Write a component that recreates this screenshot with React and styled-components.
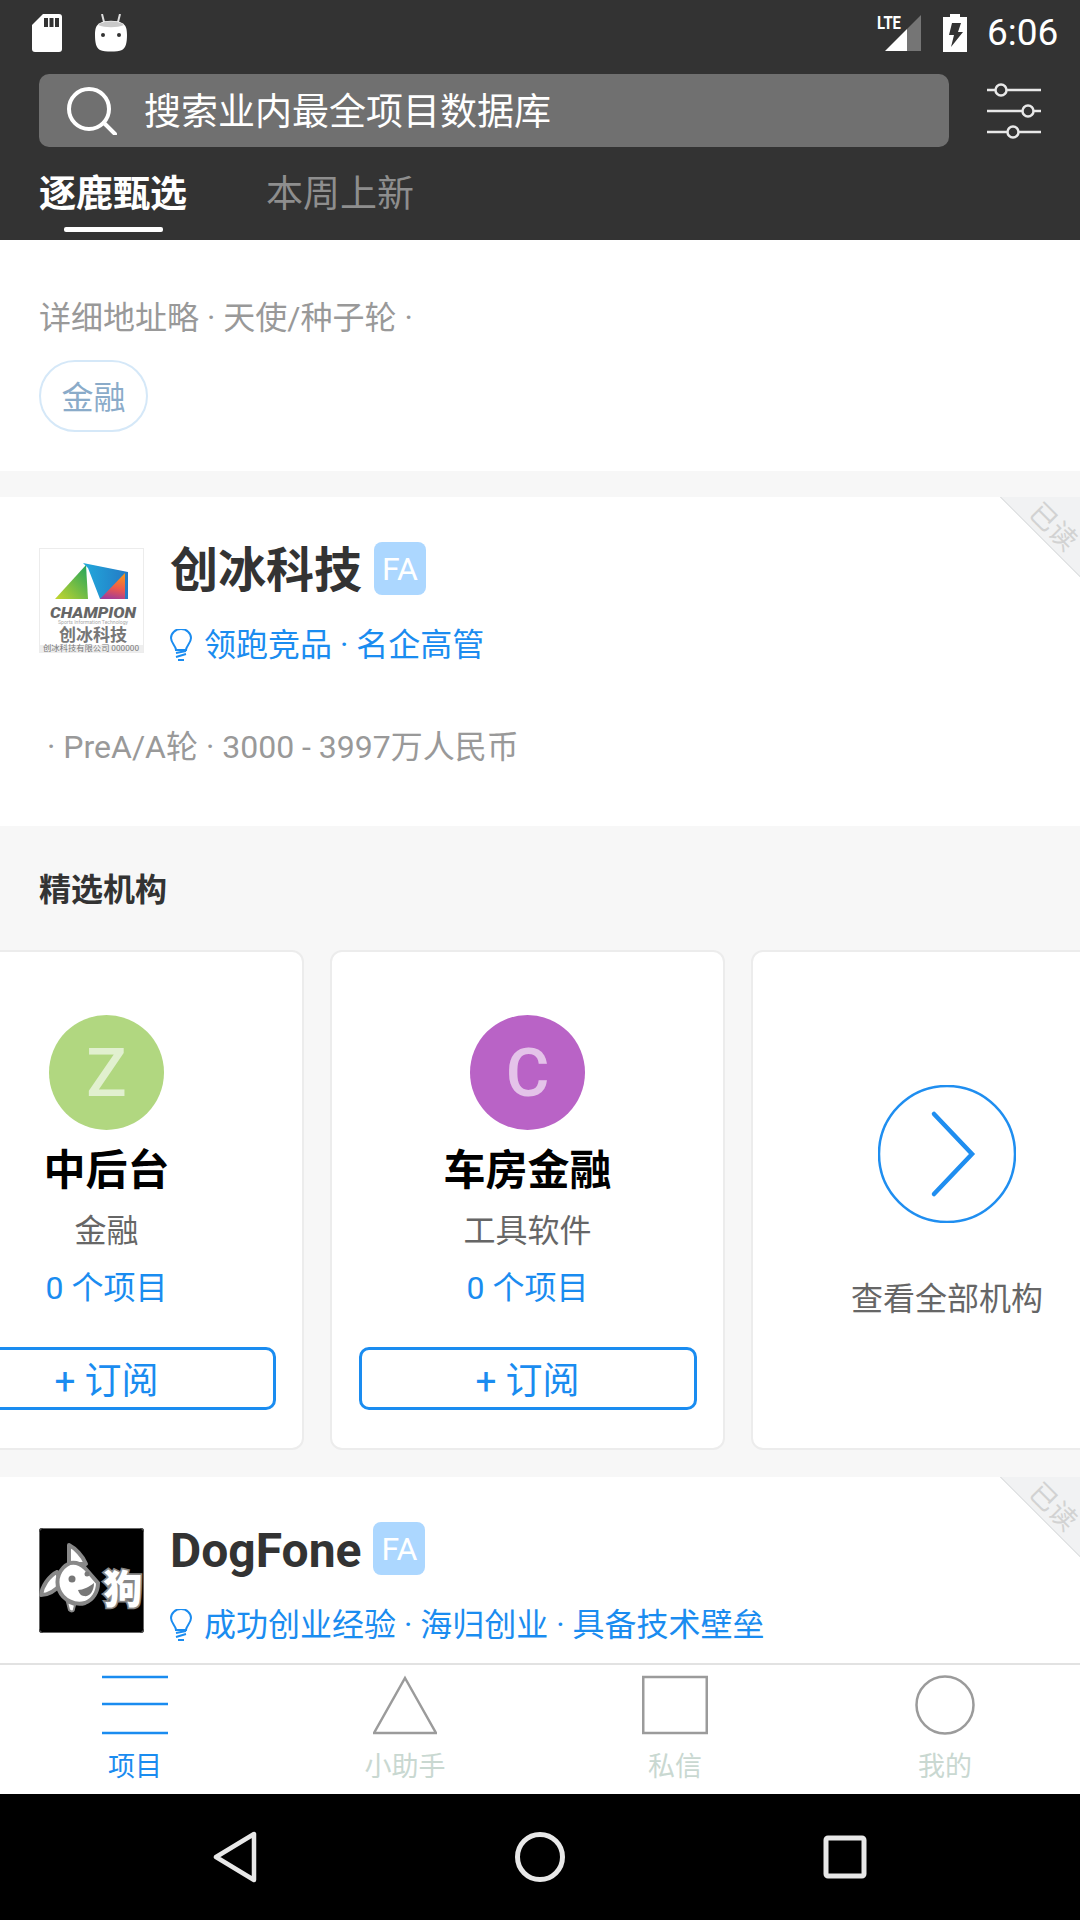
import React from "react";
import styled, { createGlobalStyle } from "styled-components";

const Global = createGlobalStyle`
  html, body { margin: 0; padding: 0; background: #000; }
  * { box-sizing: border-box; }
`;

const FONT = `Roboto, "Noto Sans CJK SC", sans-serif`;
const BLUE = "#1a8cf0";

const Page = styled.div`
  width: 1080px;
  height: 1920px;
  display: flex;
  flex-direction: column;
  overflow: hidden;
  background: #f7f7f7;
  font-family: ${FONT};
`;
const Header = styled.header`
  flex: none;
  height: 240px;
  background: #333;
  display: flex;
  flex-direction: column;
`;
const StatusBar = styled.div`
  height: 66px;
  flex: none;
  display: flex;
  align-items: center;
  padding: 0 20px 0 32px;
  color: #fff;
`;
const StatusLeft = styled.div`
  display: flex;
  align-items: center;
  gap: 33px;
  flex: 1;
`;
const StatusRight = styled.div`
  display: flex;
  align-items: center;
`;
const Clock = styled.span`
  font-size: 37px;
  margin-left: 20px;
  width: 73px;
  line-height: 66px;
  white-space: nowrap;
`;
const SearchRow = styled.div`
  flex: none;
  margin-top: 8px;
  height: 73px;
  padding-left: 39px;
  display: flex;
  align-items: center;
`;
const SearchBox = styled.div`
  width: 910px;
  height: 73px;
  border-radius: 10px;
  background: #707070;
  display: flex;
  align-items: center;
  padding-left: 28px;
  gap: 27px;
  color: #fff;
  font-size: 37px;
`;
const SearchText = styled.span`
  padding-bottom: 4px;
`;
const FilterBtn = styled.div`
  margin-left: 38px;
  display: flex;
`;
const Tabs = styled.nav`
  flex: 1;
  display: flex;
  padding-left: 39px;
  gap: 79px;
`;
const Tab = styled.div`
  width: 148px;
  display: flex;
  flex-direction: column;
  align-items: center;
  white-space: nowrap;
  font-size: 37px;
  font-weight: ${(p) => (p.$active ? 700 : 400)};
  color: ${(p) => (p.$active ? "#fff" : "#8e8e8e")};
  line-height: 54px;
  padding-top: 21px;
`;
const TabLine = styled.i`
  display: block;
  width: 99px;
  height: 5px;
  margin-top: 5px;
  border-radius: 2px;
  background: #fff;
`;
const Main = styled.main`
  flex: 1;
  min-height: 0;
  overflow: hidden;
`;
const InfoBlock = styled.section`
  background: #fff;
  padding: 56px 39px 39px;
  margin-bottom: 26px;
`;
const Meta = styled.div`
  font-size: 32px;
  line-height: 44px;
  color: #999;
  padding-left: ${(p) => p.$indent || 0}px;
`;
const Tag = styled.span`
  display: inline-flex;
  align-items: center;
  justify-content: center;
  margin-top: 20px;
  width: 109px;
  height: 72px;
  padding-bottom: 3px;
  border-radius: 36px;
  border: 2px solid #d5e8f8;
  color: #8aabc9;
  font-size: 32px;
`;
const Project = styled.article`
  position: relative;
  background: #fff;
  padding: 45px 39px 57px;
`;
const ProjectHead = styled.div`
  display: flex;
  gap: 26px;
  margin-bottom: 58px;
`;
const LogoBox = styled.div`
  width: 105px;
  height: 105px;
  margin-top: 6px;
  flex: none;
  display: flex;
`;
const ProjectText = styled.div`
  min-width: 0;
`;
const TitleRow = styled.div`
  display: flex;
  align-items: center;
  gap: 12px;
  height: 53px;
`;
const Title = styled.h2`
  margin: 0;
  padding-top: 3px;
  font-size: 48px;
  line-height: 53px;
  font-weight: 700;
  color: #333;
  white-space: nowrap;
`;
const FaBadge = styled.span`
  width: 52px;
  height: 53px;
  border-radius: 8px;
  background: #acd7ff;
  color: #fff;
  font-size: 32px;
  display: flex;
  align-items: center;
  justify-content: center;
`;
const Highlights = styled.div`
  margin-top: 28px;
  height: 44px;
  display: flex;
  align-items: center;
  gap: 12px;
  color: ${BLUE};
  font-size: 32px;
  line-height: 44px;
  white-space: nowrap;
`;
const Corner = styled.div`
  position: absolute;
  top: 0;
  right: 0;
  width: 80px;
  height: 80px;
  background: linear-gradient(45deg, #fff 49.5%, #e2e4e5 49.5%, #e2e4e5 51%, #f1f2f3 51%);
  overflow: hidden;
`;
const CornerText = styled.span`
  position: absolute;
  left: 23px;
  top: 8px;
  width: 60px;
  font-size: 27px;
  line-height: 44px;
  color: #d2d2d2;
  text-align: center;
  white-space: nowrap;
  transform: rotate(45deg);
`;
const Featured = styled.section`
  padding: 42px 0 27px;
`;
const FeaturedTitle = styled.h3`
  margin: 0 0 38px 39px;
  font-size: 32px;
  line-height: 44px;
  font-weight: 700;
  color: #333;
`;
const Scroller = styled.div`
  display: flex;
  gap: 26px;
  margin-left: -91px;
  width: max-content;
`;
const OrgCard = styled.div`
  width: 395px;
  height: 500px;
  background: #fff;
  border: 2px solid #ececec;
  border-radius: 12px;
  padding: 63px ${(p) => (p.$more ? 3 : 0)}px 0 0;
  display: flex;
  flex-direction: column;
  align-items: center;
`;
const Avatar = styled.div`
  width: 115px;
  height: 115px;
  border-radius: 50%;
  background: ${(p) => p.$bg};
  color: rgba(255, 255, 255, 0.62);
  font-size: 67px;
  font-weight: 500;
  display: flex;
  align-items: center;
  justify-content: center;
`;
const OrgName = styled.div`
  margin-top: 13px;
  font-size: 42px;
  line-height: 56px;
  font-weight: 700;
  color: #000;
`;
const OrgSub = styled.div`
  margin-top: 10px;
  font-size: 32px;
  line-height: 44px;
  color: #666;
`;
const OrgCount = styled.div`
  margin-top: 13px;
  font-size: 32px;
  line-height: 44px;
  color: ${BLUE};
`;
const Subscribe = styled.button`
  margin-top: 37px;
  width: 338px;
  height: 63px;
  border: 3px solid ${BLUE};
  border-radius: 10px;
  background: #fff;
  color: ${BLUE};
  font-family: ${FONT};
  font-size: 37px;
  padding: 0 0 2px;
`;
const MoreCircle = styled.div`
  margin-top: 70px;
  display: flex;
`;
const MoreLabel = styled.div`
  margin-top: 54px;
  font-size: 32px;
  line-height: 44px;
  color: #666;
`;
const TabBar = styled.footer`
  flex: none;
  height: 131px;
  background: #fff;
  border-top: 2px solid #e2e2e2;
  display: grid;
  grid-template-columns: repeat(4, 270px);
`;
const TabItem = styled.div`
  display: flex;
  flex-direction: column;
  align-items: center;
  color: ${(p) => (p.$active ? BLUE : "#c9d8d1")};
  font-size: 27px;
  line-height: 36px;
`;
const TabIcon = styled.div`
  height: 62px;
  margin-top: 10px;
  margin-bottom: 12px;
  display: flex;
`;
const NavBar = styled.div`
  flex: none;
  height: 126px;
  background: #000;
  display: flex;
  align-items: center;
  justify-content: center;
`;
const NavSlot = styled.div`
  width: 305px;
  display: flex;
  justify-content: center;
`;

const SdIcon = () => (
  <svg width="30" height="38" viewBox="0 0 30 38">
    <path d="M11 0H27a3 3 0 0 1 3 3V35a3 3 0 0 1-3 3H3a3 3 0 0 1-3-3V11Z" fill="#fff" />
    <path d="M12 4h4v9h-4zM17.500 4h4v9h-4zM23 4h4v9h-4z" fill="#333" />
  </svg>
);
const DroidIcon = () => (
  <svg width="32" height="38" viewBox="0 0 32 38">
    <path d="M7 0l2 8M25 0l-2 8" stroke="#ddd" strokeWidth="2" />
    <path d="M5 9C10 6 22 6 27 9c4 2 5 6 5 12 0 7-1 13-5 15-5 2-17 2-22 0C1 34 0 28 0 21 0 15 1 11 5 9Z" fill="#fff" />
    <path d="M3 11C9 6 23 6 29 11 22 14 10 14 3 11Z" fill="#c9c9c9" />
    <circle cx="8" cy="21" r="2" fill="#333" />
    <circle cx="24" cy="21" r="2" fill="#333" />
  </svg>
);
const SignalIcon = () => (
  <svg width="45" height="38" viewBox="0 0 45 38" overflow="visible">
    <path d="M8 37 30 15V37Z" fill="#fff" />
    <path d="M30 15 44 1V37H30Z" fill="#757575" />
    <text x="0" y="15" fontFamily="Roboto, sans-serif" fontWeight="700" fontSize="19" fill="#fff" textLength="24" lengthAdjust="spacingAndGlyphs">LTE</text>
  </svg>
);
const BatteryIcon = () => (
  <svg width="24" height="38" viewBox="0 0 24 38" style={{ marginLeft: 21 }}>
    <path d="M7 0h10v3h7v35H0V3h7Z" fill="#fff" />
    <path d="M9 9h9l-3 9h5L8 33l3-12H6Z" fill="#333" />
  </svg>
);
const SearchIcon = () => (
  <svg width="50" height="48" viewBox="0 0 50 48" fill="none" stroke="#fff" strokeWidth="4">
    <circle cx="22" cy="22" r="20" />
    <path d="M37 36 48 47" strokeLinecap="round" />
  </svg>
);
const FilterIcon = () => (
  <svg width="54" height="56" viewBox="0 0 54 56" fill="none" stroke="#e8e8e8" strokeWidth="2.500">
    <path d="M0 7h8M20 7h34M0 28h35M47 28h7M0 49h20M32 49h22" />
    <circle cx="14" cy="7" r="5.500" />
    <circle cx="41" cy="28" r="5.500" />
    <circle cx="26" cy="49" r="5.500" />
  </svg>
);
const Bulb = () => (
  <svg width="22" height="32" viewBox="0 0 22 32" fill="none" stroke={BLUE} strokeWidth="2" style={{ flex: "none" }}>
    <path d="M6 21C6 17 1 14 1 9a10 9 0 0 1 20 0c0 5-5 8-5 12Z" />
    <path d="M6 24 16 22M6 28 16 25M8 31h6" />
  </svg>
);
const ChampionLogo = () => (
  <svg width="105" height="105" viewBox="0 0 105 105">
    <defs>
      <linearGradient id="cg" x1="0" y1="1" x2="1" y2="0">
        <stop offset="0" stopColor="#c6d62e" />
        <stop offset="1" stopColor="#1fa35c" />
      </linearGradient>
      <linearGradient id="cb" x1="0" y1="0" x2="1" y2="0">
        <stop offset="0" stopColor="#21a9dc" />
        <stop offset="1" stopColor="#2479c4" />
      </linearGradient>
      <linearGradient id="co" x1="0.6" y1="0" x2="0.4" y2="1">
        <stop offset="0" stopColor="#f7941d" />
        <stop offset="0.55" stopColor="#ee5a4b" />
        <stop offset="1" stopColor="#a23c98" />
      </linearGradient>
    </defs>
    <rect x="0.500" y="0.500" width="104" height="104" fill="#fff" stroke="#ececec" />
    <path d="M44 15 89 24V51H61L49 20Z" fill="url(#cb)" />
    <path d="M16 51 47 17 49 51Z" fill="url(#cg)" />
    <path d="M61 51 86 25V51Z" fill="url(#co)" />
    <text x="54" y="69.500" textAnchor="middle" fontFamily="Roboto, sans-serif" fontWeight="900" fontStyle="italic" fontSize="14.500" fill="#666" textLength="86" lengthAdjust="spacingAndGlyphs">CHAMPION</text>
    <text x="54" y="76" textAnchor="middle" fontFamily="Roboto, sans-serif" fontSize="5" fill="#aaa" textLength="70" lengthAdjust="spacingAndGlyphs">Sports Information Technology</text>
    <text x="54" y="93" textAnchor="middle" fontFamily={`"Noto Sans CJK SC", sans-serif`} fontWeight="700" fontSize="17" fill="#777">创冰科技</text>
    <rect x="1" y="97" width="103" height="7" fill="#eee" />
    <text x="52" y="103" textAnchor="middle" fontFamily={`"Noto Sans CJK SC", sans-serif`} fontSize="8" fill="#777" textLength="96" lengthAdjust="spacingAndGlyphs">创冰科技有限公司 000000</text>
  </svg>
);
const DogLogo = () => (
  <svg width="105" height="105" viewBox="0 0 105 105">
    <rect width="105" height="105" rx="3" fill="#000" />
    <rect x="0.500" y="0.500" width="104" height="104" rx="3" fill="none" stroke="#666" />
    <path d="M30 17 C36 20 44 28 47 36 L30 36 Z" fill="#fff" stroke="#888" strokeWidth="4" strokeLinejoin="round" />
    <path d="M18 44 C10 48 3 58 2 67 C10 67 17 62 22 56 Z" fill="#fff" stroke="#888" strokeWidth="4" strokeLinejoin="round" />
    <path d="M31 35 C20 40 16 52 20 62 C24 72 36 78 46 75 C54 72 59 64 59 55 L46 40 C42 36 36 34 31 35Z" fill="#fff" stroke="#888" strokeWidth="4" />
    <path d="M28 74 L30 82 C32 84 35 84 35 81 L36 77Z" fill="#fff" stroke="#888" strokeWidth="2" />
    <circle cx="33" cy="51" r="3.500" fill="#777" />
    <circle cx="48" cy="46" r="2.500" fill="#777" />
    <path d="M39 62 C44 62 50 59 55 55 C55 64 50 69 45 68 C42 68 40 65 39 62Z" fill="#777" />
    <text x="84" y="75" textAnchor="middle" fontFamily={`"Noto Sans CJK SC", sans-serif`} fontWeight="900" fontSize="39" fill="#fff" stroke="#888" strokeWidth="3.500" paintOrder="stroke">狗</text>
  </svg>
);
const MoreIcon = () => (
  <svg width="138" height="138" viewBox="0 0 138 138" fill="none" stroke="#1f8ef0" strokeLinecap="round">
    <circle cx="69" cy="69" r="68" strokeWidth="2.500" />
    <path d="M56 29 94 69 56 109" strokeWidth="4.500" />
  </svg>
);
const MenuIcon = () => (
  <svg width="66" height="60" viewBox="0 0 66 60" fill="none" stroke={BLUE} strokeWidth="2.500">
    <path d="M0 2h66M0 29h66M0 58h66" />
  </svg>
);
const TriangleIcon = () => (
  <svg width="64" height="60" viewBox="0 0 64 60" fill="none" stroke="#9b9b9b" strokeWidth="2.500">
    <path d="M32 3 63 58H1Z" />
  </svg>
);
const SquareIcon = () => (
  <svg width="66" height="60" viewBox="0 0 66 60" fill="none" stroke="#9b9b9b" strokeWidth="2.500">
    <rect x="1.250" y="2" width="63.500" height="56" />
  </svg>
);
const CircleIcon = () => (
  <svg width="60" height="60" viewBox="0 0 60 60" fill="none" stroke="#9b9b9b" strokeWidth="2.500">
    <circle cx="30" cy="30" r="28.500" />
  </svg>
);
const NavBack = () => (
  <svg width="44" height="52" viewBox="0 0 44 52" fill="none" stroke="#e8e8e8" strokeWidth="4.500" strokeLinejoin="round">
    <path d="M41 3V49L3 26Z" />
  </svg>
);
const NavHome = () => (
  <svg width="50" height="50" viewBox="0 0 50 50" fill="none" stroke="#e8e8e8" strokeWidth="5">
    <circle cx="25" cy="25" r="22.500" />
  </svg>
);
const NavRecent = () => (
  <svg width="44" height="44" viewBox="0 0 44 44" fill="none" stroke="#e8e8e8" strokeWidth="5" strokeLinejoin="round">
    <rect x="3" y="3" width="38" height="38" rx="2" />
  </svg>
);

const orgs = [
  { letter: "Z", bg: "#b1d780", name: "中后台", sub: "金融" },
  { letter: "C", bg: "#b963c6", name: "车房金融", sub: "工具软件" },
];

const ReadCorner = () => (
  <Corner>
    <CornerText>已读</CornerText>
  </Corner>
);

export default function App() {
  return (
    <Page>
      <Global />
      <Header>
        <StatusBar>
          <StatusLeft>
            <SdIcon />
            <DroidIcon />
          </StatusLeft>
          <StatusRight>
            <SignalIcon />
            <BatteryIcon />
            <Clock>6:06</Clock>
          </StatusRight>
        </StatusBar>
        <SearchRow>
          <SearchBox>
            <SearchIcon />
            <SearchText>搜索业内最全项目数据库</SearchText>
          </SearchBox>
          <FilterBtn>
            <FilterIcon />
          </FilterBtn>
        </SearchRow>
        <Tabs>
          <Tab $active>
            逐鹿甄选
            <TabLine />
          </Tab>
          <Tab>本周上新</Tab>
        </Tabs>
      </Header>
      <Main>
        <InfoBlock>
          <Meta>详细地址略 · 天使/种子轮 ·</Meta>
          <Tag>金融</Tag>
        </InfoBlock>
        <Project>
          <ReadCorner />
          <ProjectHead>
            <LogoBox>
              <ChampionLogo />
            </LogoBox>
            <ProjectText>
              <TitleRow>
                <Title>创冰科技</Title>
                <FaBadge>FA</FaBadge>
              </TitleRow>
              <Highlights>
                <Bulb />
                领跑竞品 · 名企高管
              </Highlights>
            </ProjectText>
          </ProjectHead>
          <Meta $indent={8}>· PreA/A轮 · 3000 - 3997万人民币</Meta>
        </Project>
        <Featured>
          <FeaturedTitle>精选机构</FeaturedTitle>
          <Scroller>
            {orgs.map((o) => (
              <OrgCard key={o.name}>
                <Avatar $bg={o.bg}>{o.letter}</Avatar>
                <OrgName>{o.name}</OrgName>
                <OrgSub>{o.sub}</OrgSub>
                <OrgCount>0 个项目</OrgCount>
                <Subscribe>+ 订阅</Subscribe>
              </OrgCard>
            ))}
            <OrgCard $more>
              <MoreCircle>
                <MoreIcon />
              </MoreCircle>
              <MoreLabel>查看全部机构</MoreLabel>
            </OrgCard>
          </Scroller>
        </Featured>
        <Project>
          <ReadCorner />
          <ProjectHead>
            <LogoBox>
              <DogLogo />
            </LogoBox>
            <ProjectText>
              <TitleRow>
                <Title>DogFone</Title>
                <FaBadge>FA</FaBadge>
              </TitleRow>
              <Highlights>
                <Bulb />
                成功创业经验 · 海归创业 · 具备技术壁垒
              </Highlights>
            </ProjectText>
          </ProjectHead>
        </Project>
      </Main>
      <TabBar>
        <TabItem $active>
          <TabIcon>
            <MenuIcon />
          </TabIcon>
          项目
        </TabItem>
        <TabItem>
          <TabIcon>
            <TriangleIcon />
          </TabIcon>
          小助手
        </TabItem>
        <TabItem>
          <TabIcon>
            <SquareIcon />
          </TabIcon>
          私信
        </TabItem>
        <TabItem>
          <TabIcon>
            <CircleIcon />
          </TabIcon>
          我的
        </TabItem>
      </TabBar>
      <NavBar>
        <NavSlot>
          <NavBack />
        </NavSlot>
        <NavSlot>
          <NavHome />
        </NavSlot>
        <NavSlot>
          <NavRecent />
        </NavSlot>
      </NavBar>
    </Page>
  );
}
